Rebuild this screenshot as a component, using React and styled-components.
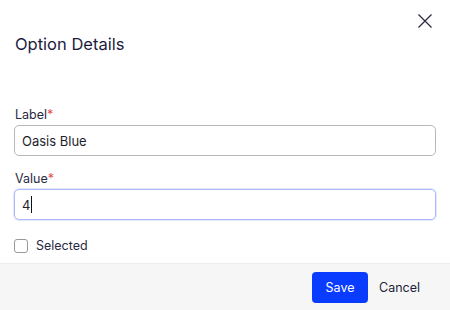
import styled, { createGlobalStyle } from 'styled-components';

const Global = createGlobalStyle`
  * { box-sizing: border-box; }
  body {
    margin: 0;
    background: #fff;
    font-family: Inter, "Noto Sans", sans-serif;
  }
`;

export default function App() {
  return (
    <>
      <Global />
      <Dialog>
        <Header>
          <Title>Option Details</Title>
          <CloseButton aria-label="Close">
            <svg width="14" height="14" viewBox="0 0 14 14">
              <path d="M0.5 0.5 L13.5 13.5 M13.5 0.5 L0.5 13.5" stroke="#2b2a42" strokeWidth="1.25" fill="none" />
            </svg>
          </CloseButton>
        </Header>

        <Body>
          <Field>
            <Label>Label<Req>*</Req></Label>
            <TextBox>Oasis Blue</TextBox>
          </Field>
          <Field>
            <Label>Value<Req>*</Req></Label>
            <TextBox focused>4<Caret /></TextBox>
          </Field>
          <CheckRow>
            <Box />
            <span>Selected</span>
          </CheckRow>
        </Body>

        <Footer>
          <SaveButton>Save</SaveButton>
          <CancelButton>Cancel</CancelButton>
        </Footer>
      </Dialog>
    </>
  );
}

const Dialog = styled.div`
  width: 450px;
  height: 310px;
  display: flex;
  flex-direction: column;
  background: #fff;
`;

const Header = styled.div`
  display: flex;
  justify-content: space-between;
  align-items: flex-start;
  padding: 14px 18px 0 15px;
  height: 106px;
`;

const Title = styled.h2`
  margin: 18px 0 0;
  font-size: 16.5px;
  line-height: 24px;
  font-weight: 400;
  color: #1d1b3d;
`;

const CloseButton = styled.button`
  border: 0;
  background: none;
  padding: 0;
  width: 14px;
  height: 14px;
  display: flex;
  cursor: pointer;
`;

const Body = styled.div`
  flex: 1;
  display: flex;
  flex-direction: column;
  padding: 0 14px 0 14px;
`;

const Field = styled.div`
  display: flex;
  flex-direction: column;
  gap: 1px;
  margin-bottom: 14px;
`;

const Label = styled.label`
  font-size: 12.5px;
  line-height: 18px;
  color: #2a2942;
  padding-left: 1px;
`;

const Req = styled.span`
  color: #e5484d;
`;

const TextBox = styled.div`
  height: 31px;
  display: flex;
  align-items: center;
  padding: 0 7px;
  font-size: 13px;
  color: #1f1e2e;
  border: 1px solid ${p => (p.focused ? '#a9b9fb' : '#b8b8b8')};
  border-radius: 5px;
  box-shadow: ${p => (p.focused ? '0 0 0 1px rgba(140, 165, 255, 0.25)' : 'none')};
`;

const Caret = styled.span`
  display: inline-block;
  width: 1px;
  height: 17px;
  background: #111;
  margin-left: 1px;
`;

const CheckRow = styled.label`
  display: flex;
  align-items: center;
  gap: 8px;
  margin-top: 4px;
  font-size: 12.5px;
  color: #2a2942;
`;

const Box = styled.span`
  width: 14px;
  height: 14px;
  border: 1px solid #999;
  border-radius: 3px;
  background: #fff;
`;

const Footer = styled.div`
  height: 47px;
  display: flex;
  justify-content: flex-end;
  align-items: center;
  padding: 1px 16px 0 0;
  background: #f6f6f6;
  border-top: 1px solid #ececec;
`;

const SaveButton = styled.button`
  height: 31px;
  width: 56px;
  padding: 0;
  border: 0;
  border-radius: 4px;
  background: #0a3cff;
  color: #fff;
  font-family: Inter, sans-serif;
  font-size: 12.5px;
`;

const CancelButton = styled.button`
  height: 31px;
  padding: 0 14px 0 11px;
  border: 0;
  background: none;
  color: #1f1d3a;
  font-family: Inter, sans-serif;
  font-size: 12.5px;
`;
